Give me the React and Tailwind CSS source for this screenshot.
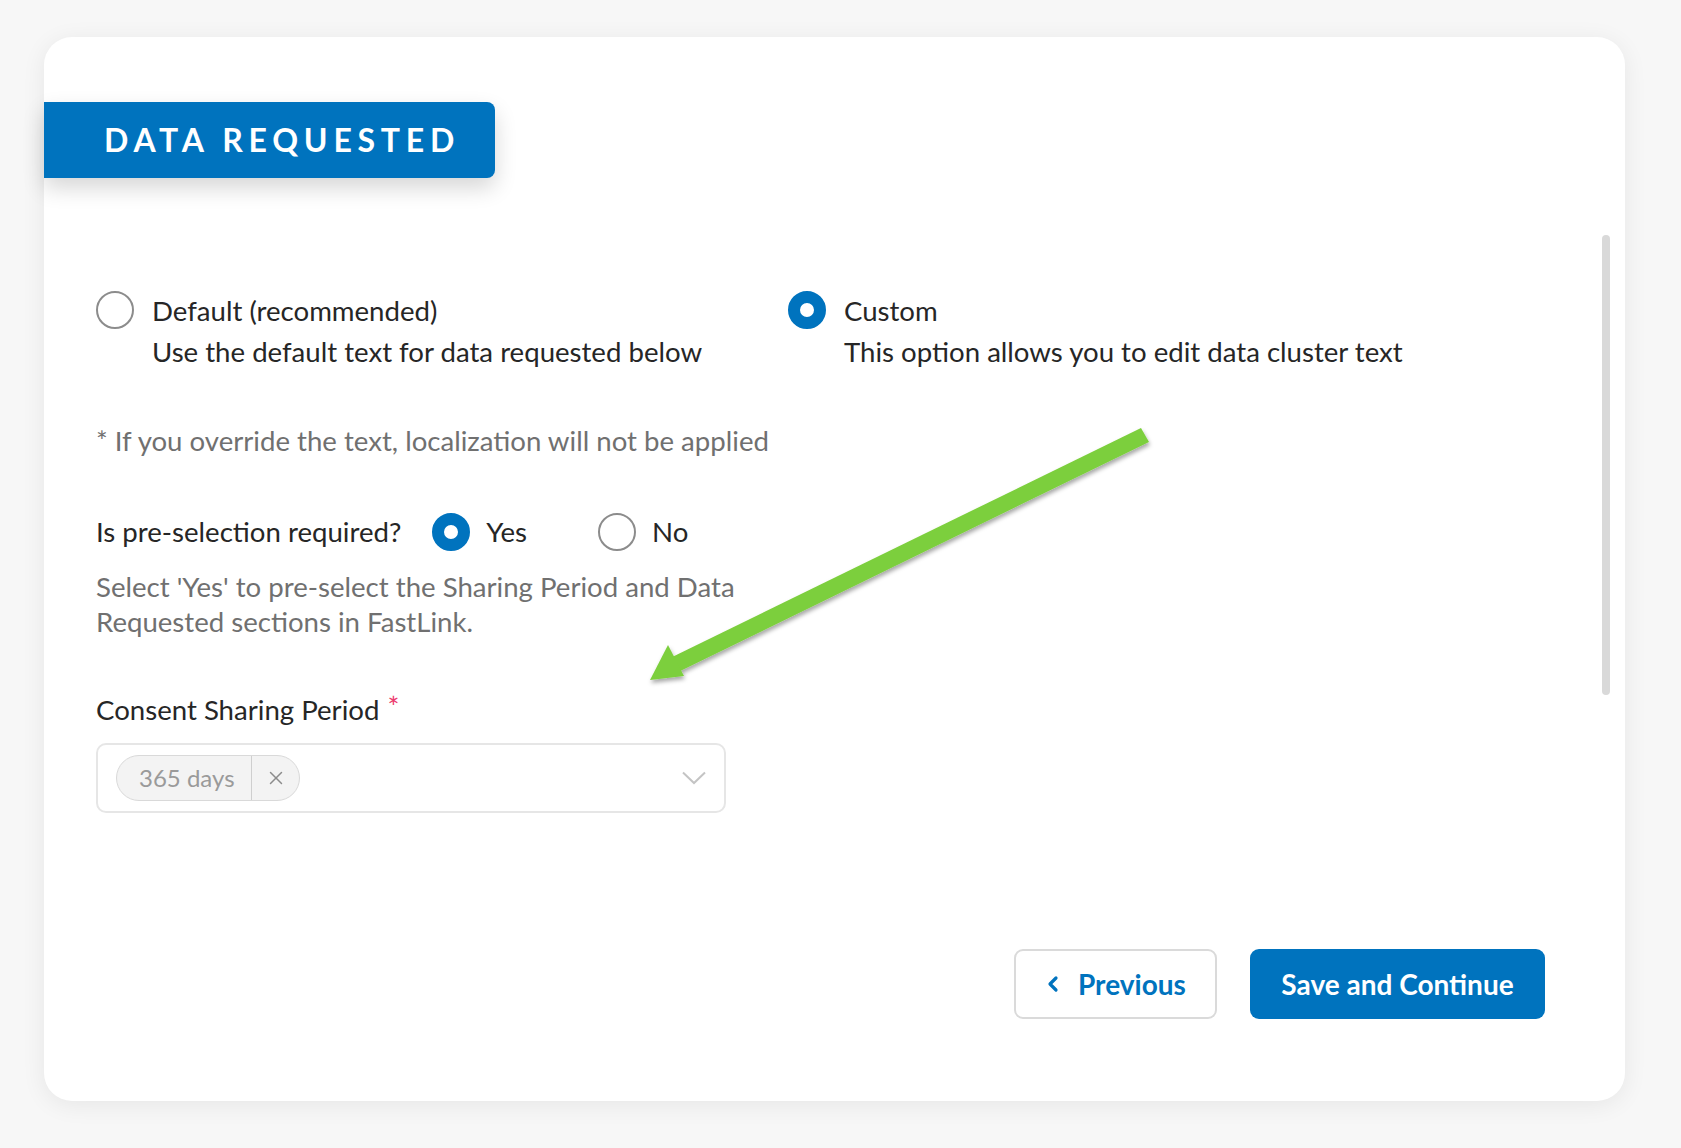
import { ChevronLeft, X } from 'lucide-react';

function Radio({ checked }) {
  return checked ? (
    <span className="block w-[38px] h-[38px] shrink-0 rounded-full border-[12px] border-[#0073be] bg-white" />
  ) : (
    <span className="block w-[38px] h-[38px] shrink-0 rounded-full border-2 border-[#8c8c8c] bg-white" />
  );
}

function Option({ checked, title, desc }) {
  return (
    <div className="flex items-start gap-[18px]">
      <div className="pt-[1px]">
        <Radio checked={checked} />
      </div>
      <div className="text-[27.6px] leading-[41px] text-[#262626]">
        <div>{title}</div>
        <div>{desc}</div>
      </div>
    </div>
  );
}

function GreenArrow() {
  return (
    <svg
      className="absolute left-0 top-0 pointer-events-none"
      width="1681"
      height="1148"
      viewBox="0 0 1681 1148"
    >
      <defs>
        <filter id="arrowShadow" x="-10%" y="-10%" width="120%" height="130%">
          <feDropShadow dx="1" dy="3" stdDeviation="2" floodColor="#000" floodOpacity="0.35" />
        </filter>
      </defs>
      <g filter="url(#arrowShadow)" fill="#7ccf3c">
        <polygon points="1141,428 1149,442 672,675 664,661" />
        <polygon points="650,680 668,645 684,676" />
      </g>
    </svg>
  );
}

export default function App() {
  return (
    <div
      className="relative w-[1681px] h-[1148px] bg-[#f7f7f7] overflow-hidden"
      style={{ fontFamily: 'Lato, "Open Sans", sans-serif' }}
    >
      <div className="pt-[37px] pl-[44px]">
        <div className="flex w-[1581px] h-[1064px] rounded-[28px] bg-white shadow-[0_4px_24px_rgba(0,0,0,0.07)]">
          <div className="flex-1 flex flex-col">
            <div className="mt-[65px] w-[451px] h-[76px] flex items-center pl-[60px] bg-[#0073be] rounded-r-[8px] shadow-[0_10px_22px_rgba(0,0,0,0.16)]">
              <span className="text-white text-[32px] font-bold tracking-[0.18em]">DATA REQUESTED</span>
            </div>

            <div className="pl-[52px]">
              <div className="mt-[112px] flex">
                <div className="w-[692px]">
                  <Option
                    checked={false}
                    title="Default (recommended)"
                    desc="Use the default text for data requested below"
                  />
                </div>
                <Option
                  checked
                  title="Custom"
                  desc="This option allows you to edit data cluster text"
                />
              </div>

              <p className="mt-[49px] text-[27.6px] leading-[40px] text-[#707070]">
                * If you override the text, localization will not be applied
              </p>

              <div className="mt-[51px] flex items-center text-[27.6px] leading-[40px] text-[#262626]">
                <span>Is pre-selection required?</span>
                <span className="ml-[31px]">
                  <Radio checked />
                </span>
                <span className="ml-[16px]">Yes</span>
                <span className="ml-[71px]">
                  <Radio checked={false} />
                </span>
                <span className="ml-[16px]">No</span>
              </div>

              <p className="mt-[17px] w-[700px] text-[27.6px] leading-[35px] text-[#707070]">
                Select 'Yes' to pre-select the Sharing Period and Data
                <br />
                Requested sections in FastLink.
              </p>

              <div className="mt-[51px] flex items-start text-[27.6px] leading-[40px] text-[#262626]">
                <span>Consent Sharing Period</span>
                <span className="ml-[8px] -mt-[3px] text-[#ec3a6e] text-[28px]">*</span>
              </div>

              <div className="mt-[13px] w-[630px] h-[70px] flex items-center justify-between pl-[18px] pr-[18px] rounded-[10px] border-2 border-[#e6e6e6]">
                <div className="flex items-center h-[46px] rounded-full border border-[#d9d9d9] bg-[#f3f3f3]">
                  <span className="pl-[22px] pr-[16px] text-[24px] text-[#9a9a9a]">365 days</span>
                  <span className="w-px h-full bg-[#cfcfcf]" />
                  <span className="pl-[13px] pr-[12px] text-[#8c8c8c]">
                    <X size={22} strokeWidth={1.6} />
                  </span>
                </div>
                <svg width="24" height="14" viewBox="0 0 24 14" fill="none">
                  <polyline points="1,1.5 12,12 23,1.5" stroke="#c4c4c4" strokeWidth="2" />
                </svg>
              </div>
            </div>

            <div className="mt-[136px] flex justify-end gap-[33px] pr-[57px]">
              <button
                type="button"
                className="w-[203px] h-[70px] flex items-center pl-[25px] gap-[13px] rounded-[9px] border-2 border-[#dadada] bg-white text-[#0073be] text-[28px] font-bold"
              >
                <ChevronLeft size={24} strokeWidth={3.2} />
                Previous
              </button>
              <button
                type="button"
                className="w-[295px] h-[70px] flex items-center justify-center rounded-[9px] bg-[#0073be] text-white text-[28px] font-bold"
              >
                Save and Continue
              </button>
            </div>
          </div>

          <div className="pt-[198px] pr-[15px]">
            <div className="w-[8px] h-[460px] rounded-full bg-[#d9d9d9]" />
          </div>
        </div>
      </div>
      <GreenArrow />
    </div>
  );
}
